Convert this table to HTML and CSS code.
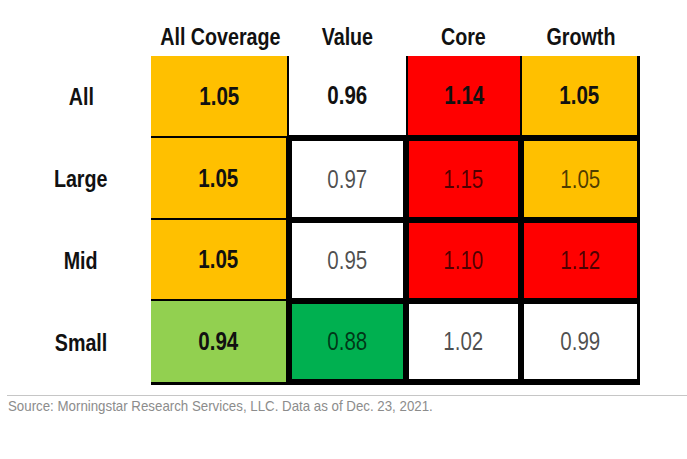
FILE: index.html
```html
<!DOCTYPE html>
<html lang="en">
<head>
<meta charset="utf-8">
<title>Valuation by style box</title>
<link rel="stylesheet" href="styles.css">
</head>
<body>
<div class="page">
  <div class="grid">
    <div class="hd"></div>
    <div class="hd"><span class="nar">All Coverage</span></div>
    <div class="hd"><span class="nar">Value</span></div>
    <div class="hd"><span class="nar">Core</span></div>
    <div class="hd"><span class="nar">Growth</span></div>

    <div class="lbl"><span class="nar">All</span></div>
    <div class="cell yellow c1 r1 bold"><span class="num">1.05</span></div>
    <div class="cell white r1 c2top bold"><span class="num">0.96</span></div>
    <div class="cell red r1 c3top bold"><span class="num">1.14</span></div>
    <div class="cell yellow r1 c4top bold"><span class="num">1.05</span></div>

    <div class="lbl"><span class="nar">Large</span></div>
    <div class="cell yellow c1 mid bold"><span class="num">1.05</span></div>
    <div class="cell white box"><span class="num">0.97</span></div>
    <div class="cell red box"><span class="num">1.15</span></div>
    <div class="cell yellow box"><span class="num">1.05</span></div>

    <div class="lbl"><span class="nar">Mid</span></div>
    <div class="cell yellow c1 mid bold"><span class="num">1.05</span></div>
    <div class="cell white box"><span class="num">0.95</span></div>
    <div class="cell red box"><span class="num">1.10</span></div>
    <div class="cell red box"><span class="num">1.12</span></div>

    <div class="lbl"><span class="nar">Small</span></div>
    <div class="cell lgreen c1 last bold"><span class="num">0.94</span></div>
    <div class="cell green box last"><span class="num">0.88</span></div>
    <div class="cell white box last"><span class="num">1.02</span></div>
    <div class="cell white box last"><span class="num">0.99</span></div>
  </div>
  <div class="rule"></div>
  <p class="source"><span class="nar-left">Source: Morningstar Research Services, LLC. Data as of Dec. 23, 2021.</span></p>
</div>
</body>
</html>
```

FILE: styles.css
```css
html, body {
  margin: 0;
  padding: 0;
  background: #ffffff;
}

.page {
  width: 687px;
  height: 459px;
  font-family: "Liberation Sans", Arial, sans-serif;
  color: #111111;
}

.nar {
  display: inline-block;
  white-space: nowrap;
  transform: scaleX(0.82);
}

.num {
  display: inline-block;
  white-space: nowrap;
  transform: scaleX(0.79);
}

.nar-left {
  display: inline-block;
  white-space: nowrap;
  transform: scaleX(0.886);
  transform-origin: left center;
}

.grid {
  display: grid;
  grid-template-columns: 140px 138px 117px 115px 119px;
  grid-template-rows: 56px 82px 82px 81px 84px;
  margin-left: 11px;
}

.hd {
  display: flex;
  align-items: flex-end;
  justify-content: center;
  padding-bottom: 7px;
  font-size: 24px;
  line-height: 24px;
  font-weight: bold;
  white-space: nowrap;
}

.lbl {
  display: flex;
  align-items: center;
  justify-content: center;
  font-size: 24px;
  font-weight: bold;
}

.cell {
  box-sizing: border-box;
  display: flex;
  align-items: center;
  justify-content: center;
  font-size: 26px;
  color: rgba(0, 0, 0, 0.7);
}

.bold {
  font-weight: bold;
  color: #111111;
}

.yellow { background: #ffc000; }
.red { background: #ff0000; }
.white { background: #ffffff; }
.lgreen { background: #92d050; }
.green { background: #00b050; }

/* All Coverage column */
.c1 {
  border-bottom: 2px solid #000;
  border-right: 3px solid #000;
}
.c1.r1 {
  border-right-width: 2px;
}
.c1.last {
  border-bottom-width: 3px;
}

/* top row, value/core/growth */
.c2top {
  border-bottom: 3px solid #000;
}
.c3top {
  border-bottom: 3px solid #000;
  border-left: 2px solid #000;
  border-right: 1px solid #000;
}
.c4top {
  border-bottom: 3px solid #000;
  border-left: 1px solid #000;
  border-right: 3px solid #000;
}

/* thick grid for the lower 3x3 block */
.box {
  border: 3px solid #000;
}
.box.last {
  border-bottom-width: 6px;
}

.rule {
  margin: 10px 0 0 7px;
  height: 0;
  border-top: 1px solid #c6c6c6;
}

.source {
  margin: 2px 0 0 8px;
  font-size: 15px;
  line-height: 16px;
  color: #8c8c8c;
}
```
